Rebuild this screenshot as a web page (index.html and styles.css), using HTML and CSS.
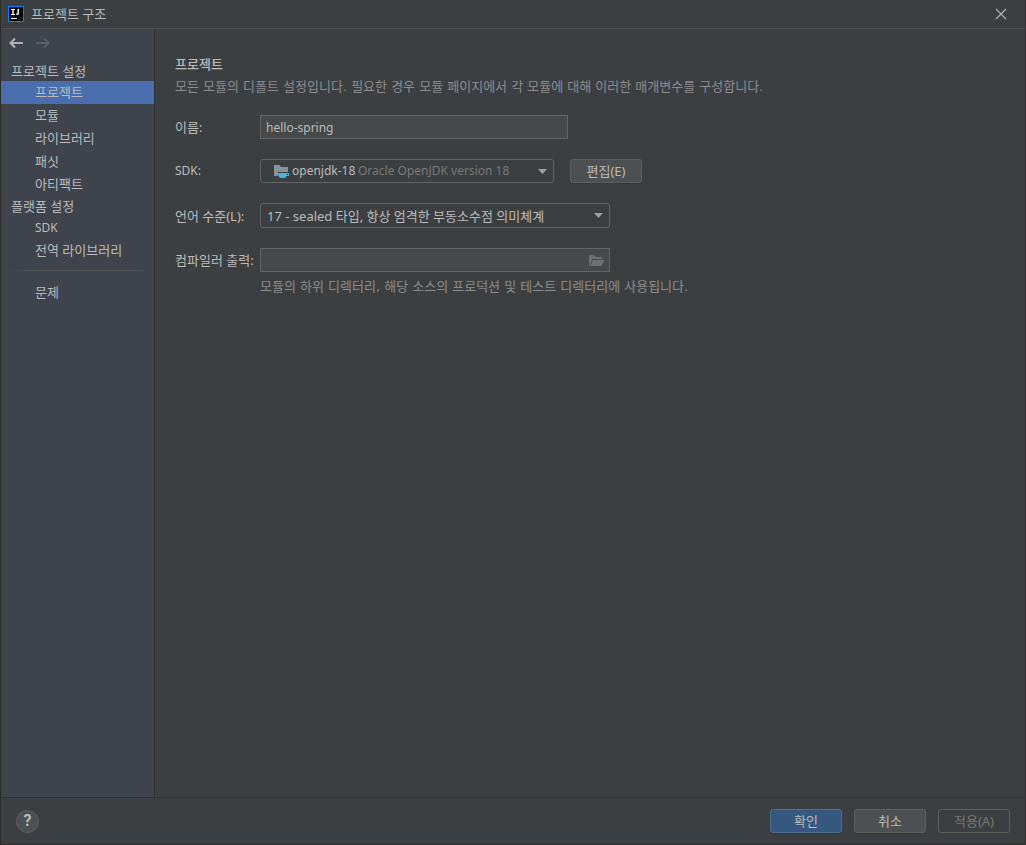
FILE: index.html
```html
<!DOCTYPE html>
<html lang="ko">
<head>
<meta charset="utf-8">
<meta name="viewport" content="width=device-width, initial-scale=1">
<title>프로젝트 구조</title>
<link rel="stylesheet" href="styles.css">
</head>
<body>
<div class="dialog">
  <header class="titlebar">
    <svg class="app-icon" width="16" height="16" viewBox="0 0 16 16" aria-hidden="true">
      <rect width="16" height="16" fill="#087cfa"/>
      <rect x="1" y="1" width="14" height="14" fill="#000"/>
      <path d="M3 3h4v1H5.700v4H7v1H3V8h1.300V4H3zM9.500 3H11v4.300c0 1.200-.6 1.700-1.600 1.700C8.600 9 8 8.700 7.600 8.100l.8-.9c.7.8 1.100.6 1.100-.2zM3 12h6v1H3z" fill="#fff"/>
    </svg>
    <h1 class="titlebar-text">프로젝트 구조</h1>
    <button class="icon-button close" type="button" aria-label="닫기">
      <svg width="12" height="12" viewBox="0 0 12 12" aria-hidden="true"><path d="M1 1l10 10M11 1L1 11" stroke="#b4b6b7" stroke-width="1.100" fill="none"/></svg>
    </button>
  </header>

  <div class="body">
    <aside class="sidebar">
      <div class="history">
        <button class="icon-button" type="button" aria-label="뒤로">
          <svg width="14" height="12" viewBox="0 0 14 12" aria-hidden="true"><path d="M14 6H2M6 1.500L1.500 6L6 10.500" stroke="#afb1b3" stroke-width="2" fill="none"/></svg>
        </button>
        <button class="icon-button" type="button" aria-label="앞으로" disabled>
          <svg width="14" height="12" viewBox="0 0 14 12" aria-hidden="true"><path d="M0 6H12M8 1.500L12.500 6L8 10.500" stroke="#5b5e62" stroke-width="2" fill="none"/></svg>
        </button>
      </div>
      <nav class="nav">
        <h2 class="nav-heading">프로젝트 설정</h2>
        <a class="nav-item selected" href="#project" aria-current="page">프로젝트</a>
        <a class="nav-item" href="#modules">모듈</a>
        <a class="nav-item" href="#libraries">라이브러리</a>
        <a class="nav-item" href="#facets">패싯</a>
        <a class="nav-item" href="#artifacts">아티팩트</a>
        <h2 class="nav-heading">플랫폼 설정</h2>
        <a class="nav-item" href="#sdk"><span class="latin">SDK</span></a>
        <a class="nav-item" href="#global">전역 라이브러리</a>
        <hr class="nav-line">
        <a class="nav-item" href="#problems">문제</a>
      </nav>
    </aside>

    <main class="content">
      <h2 class="page-title">프로젝트</h2>
      <p class="hint">모든 모듈의 디폴트 설정입니다. 필요한 경우 모듈 페이지에서 각 모듈에 대해 이러한 매개변수를 구성합니다.</p>
      <form class="form" id="settings">
        <label for="name">이름:</label>
        <input class="field name latin" id="name" type="text" value="hello-spring">

        <label class="latin" for="project-sdk">SDK:</label>
        <div class="sdk-row">
          <div class="combo sdk">
            <select class="field latin" id="project-sdk" aria-describedby="sdk-version"><option>openjdk-18</option></select>
            <span class="sdk-icon" aria-hidden="true">
              <svg width="16" height="16" viewBox="0 0 16 16">
                <path d="M1 2h5.500l1.500 2h7v5H5v4H1z" fill="#87939a"/>
                <path d="M5 10h11v3h-2.500c-.5 1.500-1.500 2-2.500 2H8.500C6.500 15 5 13.500 5 10zM13.800 11v1h1.200v-1z" fill="#40b6e0" fill-rule="evenodd"/>
              </svg>
            </span>
            <span class="sdk-version latin" id="sdk-version">Oracle OpenJDK version 18</span>
            <svg class="arrow" width="9" height="5" viewBox="0 0 9 5" aria-hidden="true"><path d="M0 0h9L4.500 5z" fill="#9da0a2"/></svg>
          </div>
          <button class="button" type="button">편집(E)</button>
        </div>

        <label for="level">언어 수준(L):</label>
        <div class="combo">
          <select class="field level" id="level"><option>17 - sealed 타입, 항상 엄격한 부동소수점 의미체계</option></select>
          <svg class="arrow" width="9" height="5" viewBox="0 0 9 5" aria-hidden="true"><path d="M0 0h9L4.500 5z" fill="#9da0a2"/></svg>
        </div>

        <label for="output">컴파일러 출력:</label>
        <div class="combo">
          <input class="field" id="output" type="text" aria-describedby="output-hint">
          <button class="icon-button browse" type="button" aria-label="찾아보기">
            <svg width="16" height="12" viewBox="0 0 16 12" aria-hidden="true"><path d="M0 11V0h5l2 2h6v2H3.500L1 9v2zM4 5h11.500l-3 6H1z" fill="#6b7073"/></svg>
          </button>
        </div>
        <p class="hint output-hint" id="output-hint">모듈의 하위 디렉터리, 해당 소스의 프로덕션 및 테스트 디렉터리에 사용됩니다.</p>
      </form>
    </main>
  </div>

  <footer class="footer">
    <button class="help" type="button" aria-label="도움말">?</button>
    <button class="button primary" type="submit" form="settings">확인</button>
    <button class="button" type="button">취소</button>
    <button class="button" type="button" disabled>적용(A)</button>
  </footer>
</div>
</body>
</html>
```

FILE: styles.css
```css
* {
  box-sizing: border-box;
}

body {
  margin: 0;
  background: #3c3f41;
  color: #bbbbbb;
}

body,
button,
input,
select {
  font: 13px/20px "Noto Sans", "Noto Sans CJK KR", sans-serif;
}

h1,
h2,
p {
  margin: 0;
  font-size: 13px;
  font-weight: 400;
}

.latin {
  font-size: 12px;
}

.dialog {
  display: flex;
  flex-direction: column;
  min-height: 100vh;
  border: 1px solid #2b2b2b;
  border-top: 0;
}

.titlebar {
  display: flex;
  align-items: center;
  gap: 7px;
  height: 29px;
  padding: 0 18px 0 7px;
  border-bottom: 1px solid #515151;
}

.titlebar-text {
  flex: 1;
}

.icon-button {
  display: flex;
  padding: 0;
  border: 0;
  background: none;
}

.body {
  display: flex;
  flex: 1;
}

.sidebar {
  flex: none;
  width: 154px;
  border-right: 1px solid #323232;
  background: #3e434c;
}

.history {
  display: flex;
  gap: 13px;
  padding: 8px 8px 12px;
}

.nav {
  display: flex;
  flex-direction: column;
}

.nav-heading {
  padding-left: 10px;
  line-height: 20px;
}

.nav-item {
  padding-left: 34px;
  color: inherit;
  line-height: 23px;
  text-decoration: none;
}

.nav-item.selected {
  background: #4b6eaf;
}

.nav-line {
  width: 144px;
  height: 1px;
  margin: 8px 0 10px 6px;
  border: 0;
  background: linear-gradient(90deg, transparent, #55575a 20%, #55575a 80%, transparent);
}

.content {
  flex: 1;
  padding: 24px 20px;
}

.page-title {
  font-weight: 500;
  line-height: 22px;
}

.hint {
  color: #8c8c8c;
  font-family: "DejaVu Sans", "Noto Sans CJK KR", sans-serif;
  line-height: 24px;
}

.form {
  display: grid;
  grid-template-columns: 79px 350px;
  justify-content: start;
  align-items: center;
  gap: 20px 6px;
  margin-top: 16px;
}

.form label {
  white-space: nowrap;
}

.field {
  display: block;
  width: 100%;
  height: 24px;
  padding: 0 5px;
  border: 1px solid #646464;
  border-radius: 0;
  background: #45494a;
  color: #bbbbbb;
  outline: 0;
}

input.latin,
select.latin {
  font-size: 12px;
}

.name {
  width: 308px;
}

select.field {
  border-radius: 3px;
  background: #3c3f41;
  appearance: none;
}

select.level {
  height: 25px;
  padding-left: 6px;
}

.combo {
  position: relative;
}

.sdk-row {
  display: flex;
  gap: 16px;
  width: 382px;
}

.sdk {
  width: 294px;
}

.sdk select {
  padding-left: 31px;
}

.sdk-icon,
.sdk-version {
  position: absolute;
  top: 2px;
  pointer-events: none;
}

.sdk-icon {
  top: 4px;
  left: 13px;
  display: flex;
}

.sdk-version {
  left: 98px;
  color: #787878;
}

.arrow {
  position: absolute;
  top: 10px;
  right: 7px;
  pointer-events: none;
}

.browse {
  position: absolute;
  top: 7px;
  right: 5px;
}

.output-hint {
  grid-column: 2;
  margin-top: -17px;
  white-space: nowrap;
}

.button {
  width: 72px;
  height: 24px;
  padding: 0;
  border: 1px solid #5e6060;
  border-radius: 3px;
  background: #4c5052;
  color: #bbbbbb;
  box-shadow: 0 1px 0 #36393a;
}

.button.primary {
  border-color: #4c708c;
  background: #365880;
}

.button:disabled {
  background: none;
  color: #777777;
  box-shadow: none;
}

.footer {
  display: flex;
  align-items: center;
  gap: 12px;
  height: 47px;
  padding: 0 15px;
  border-top: 1px solid #323232;
}

.help {
  width: 23px;
  height: 23px;
  margin-right: auto;
  padding: 0;
  border: 1px solid #5e6060;
  border-radius: 50%;
  background: #4c5052;
  color: #bbbbbb;
  font-family: Roboto, sans-serif;
  font-size: 16px;
  font-weight: 700;
}
```
